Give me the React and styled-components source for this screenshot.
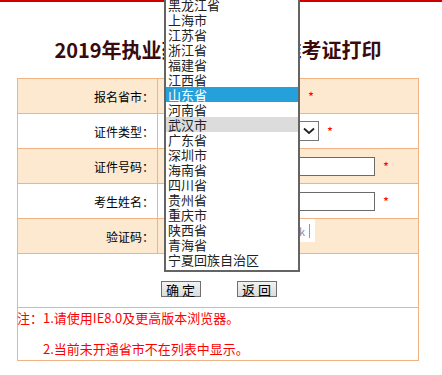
import React from 'react';
import styled, { createGlobalStyle } from 'styled-components';

const Global = createGlobalStyle`
  html, body { margin: 0; padding: 0; background: #fff; }
  body { font-family: "Noto Sans CJK SC", "Noto Sans", sans-serif; }
  * { box-sizing: border-box; }
`;

const Page = styled.div`
  position: relative;
  width: 442px;
  height: 375px;
  overflow: hidden;
`;

const TopBar = styled.div`
  height: 2px;
  background: #cc0000;
`;

const Title = styled.h1`
  margin: 0 0 0 17px;
  width: 402px;
  padding: 34px 0 14px;
  font-size: 20px;
  line-height: 28px;
  font-weight: bold;
  text-align: center;
  color: #3b0b0b;
  white-space: nowrap;
`;

const Form = styled.div`
  margin-left: 17px;
  width: 402px;
  border: 1px solid #f0b383;
  border-bottom: none;
`;

const Row = styled.div`
  display: grid;
  grid-template-columns: 140px 1fr;
  height: 35px;
  border-bottom: 1px solid #f0b383;
  background: ${p => (p.$alt ? '#fde9d0' : '#ffffff')};
`;

const Label = styled.div`
  display: flex;
  align-items: center;
  justify-content: flex-end;
  padding-right: 3px;
  border-right: 1px solid #f0b383;
  font-size: 12px;
  color: #000;
`;

const Value = styled.div`
  display: flex;
  align-items: ${p => (p.$top ? 'flex-start' : 'center')};
  padding-left: 6px;
`;

const FakeSelect = styled.div`
  width: ${p => p.$w}px;
  height: 20px;
  border: 1px solid #767676;
  background: #fff;
  display: flex;
  align-items: center;
  justify-content: flex-end;
  padding-right: 3px;
`;

const TextInput = styled.div`
  width: ${p => p.$w}px;
  height: 19px;
  border: 1px solid #6b6b6b;
  background: #fff;
`;

const CaptchaInput = styled(TextInput)`
  margin-top: 7px;
`;

const Captcha = styled.div`
  width: 79px;
  height: 23px;
  margin-left: 4px;
  background: #fff;
  display: flex;
  align-items: center;
  justify-content: flex-end;
  padding-right: 5px;
  gap: 4px;
  font-size: 11px;
  color: #8a8a9a;
`;

const CaptchaBar = styled.span`
  width: 1px;
  height: 14px;
  background: #999;
`;

const Star = styled.span`
  color: #ff0000;
  font-size: 13px;
  margin-left: 8px;
  line-height: 1;
`;

const ButtonRow = styled.div`
  height: 54px;
  border-bottom: 1px solid #f0b383;
  display: flex;
  justify-content: center;
  align-items: flex-start;
  gap: 36px;
  padding-top: 27px;
  padding-left: 1px;
`;

const Button = styled.button`
  width: 40px;
  height: 16px;
  padding: 0;
  margin: 0;
  border: 1px solid #707070;
  background: linear-gradient(#f2f2f2, #dcdcdc);
  font-family: "Noto Sans CJK SC", sans-serif;
  font-size: 13px;
  line-height: 13px;
  color: #000;
  white-space: pre;
`;

const Notes = styled.div`
  height: 53px;
  border-bottom: 1px solid #f0b383;
  margin-left: -1px;
  padding-top: 0;
  color: #ff0000;
  font-size: 13px;
`;

const NoteLine = styled.div`
  line-height: 20px;
  padding-left: ${p => p.$indent || 0}px;
  margin-bottom: 11px;
`;

const ListBox = styled.div`
  position: absolute;
  left: 164px;
  top: -5px;
  width: 136px;
  border: 2px solid #646464;
  background: #fff;
  padding-bottom: 3px;
`;

const Option = styled.div`
  height: 15px;
  line-height: 15px;
  padding-left: 2px;
  font-size: 13px;
  white-space: nowrap;
  color: ${p => (p.$active ? '#fff' : '#222')};
  background: ${p => (p.$active ? '#26a0da' : p.$hover ? '#dcdcdc' : 'transparent')};
`;

const Chevron = () => (
  <svg width="12" height="8" viewBox="0 0 12 8">
    <path d="M1 1.5 L6 6 L11 1.5" fill="none" stroke="#222" strokeWidth="1.8" />
  </svg>
);

const provinces = [
  '黑龙江省', '上海市', '江苏省', '浙江省', '福建省', '江西省', '山东省',
  '河南省', '武汉市', '广东省', '深圳市', '海南省', '四川省', '贵州省',
  '重庆市', '陕西省', '青海省', '宁夏回族自治区',
];

export default function App() {
  return (
    <Page>
      <Global />
      <TopBar />
      <Title>2019年执业药师资格考试准考证打印</Title>
      <Form>
        <Row $alt>
          <Label>报名省市：</Label>
          <Value>
            <FakeSelect $w={136}><Chevron /></FakeSelect>
            <Star>*</Star>
          </Value>
        </Row>
        <Row>
          <Label>证件类型：</Label>
          <Value>
            <FakeSelect $w={155}><Chevron /></FakeSelect>
            <Star>*</Star>
          </Value>
        </Row>
        <Row $alt>
          <Label>证件号码：</Label>
          <Value>
            <TextInput $w={211} />
            <Star>*</Star>
          </Value>
        </Row>
        <Row>
          <Label>考生姓名：</Label>
          <Value>
            <TextInput $w={211} />
            <Star>*</Star>
          </Value>
        </Row>
        <Row $alt>
          <Label>验证码：</Label>
          <Value $top>
            <CaptchaInput $w={68} />
            <Captcha>k<CaptchaBar /></Captcha>
          </Value>
        </Row>
        <ButtonRow>
          <Button>确 定</Button>
          <Button>返 回</Button>
        </ButtonRow>
        <Notes>
          <NoteLine>注：1.请使用IE8.0及更高版本浏览器。</NoteLine>
          <NoteLine $indent={26}>2.当前未开通省市不在列表中显示。</NoteLine>
        </Notes>
      </Form>
      <ListBox>
        {provinces.map(p => (
          <Option key={p} $active={p === '山东省'} $hover={p === '武汉市'}>{p}</Option>
        ))}
      </ListBox>
    </Page>
  );
}
